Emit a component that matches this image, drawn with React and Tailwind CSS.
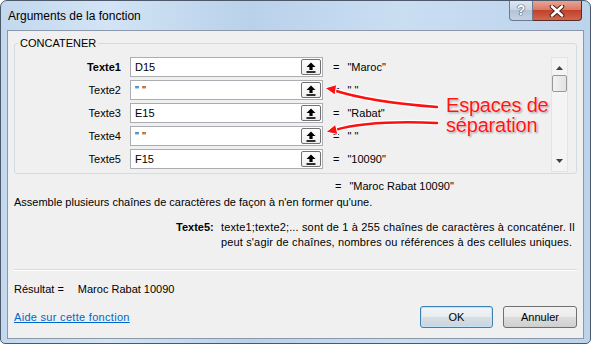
import React from 'react';

const rows = [
  { label: 'Texte1', input: 'D15', value: '"Maroc"', bold: true },
  { label: 'Texte2', input: '" "', value: '" "' },
  { label: 'Texte3', input: 'E15', value: '"Rabat"' },
  { label: 'Texte4', input: '" "', value: '" "' },
  { label: 'Texte5', input: 'F15', value: '"10090"' },
];

const RefIcon = () => (
  <svg width="10" height="11" viewBox="0 0 10 11">
    <path d="M5 0.5 L9.5 5 H6.6 V8 H3.4 V5 H0.5 Z" fill="#000" />
    <rect x="0.5" y="9.2" width="9" height="1.6" fill="#000" />
  </svg>
);

const ArgRow = ({ label, input, value, bold }) => (
  <div className="h-[20px] flex items-center">
    <div className={`w-[106px] text-right ${bold ? 'font-bold' : ''}`}>{label}</div>
    <div className="ml-[9px] w-[193px] h-[20px] border border-[#abadb3] bg-white flex items-center pl-[4px]">
      <span>{input}</span>
      <div className="ml-auto mr-[1px] w-[20px] h-[16px] border border-[#707070] rounded-[2px] bg-[linear-gradient(#ffffff,#f0f0f0)] flex items-center justify-center">
        <RefIcon />
      </div>
    </div>
    <div className="ml-[10px]">=</div>
    <div className="ml-[8px]">{value}</div>
  </div>
);

const Scrollbar = () => (
  <div className="w-[17px] h-[115px] ml-auto mr-[8px] border border-[#e4e4e4] bg-[#f4f4f4] flex flex-col items-center">
    <svg width="7" height="4" viewBox="0 0 7 4" className="mt-[8px]">
      <path d="M3.5 0 L7 4 H0 Z" fill="#404040" />
    </svg>
    <div className="mt-[5px] w-[15px] h-[17px] border border-[#979797] rounded-[2px] bg-[linear-gradient(90deg,#f3f3f3,#e2e2e2)]" />
    <svg width="7" height="4" viewBox="0 0 7 4" className="mt-auto mb-[8px]">
      <path d="M0 0 H7 L3.5 4 Z" fill="#404040" />
    </svg>
  </div>
);

const Annotation = () => (
  <>
    <svg className="absolute left-0 top-0 pointer-events-none" width="591" height="344">
      <g fill="none" strokeLinecap="round">
        <path d="M437 107 Q370 102 333 90" stroke="#fff" strokeWidth="5" />
        <path d="M437 123 Q370 120 335 130" stroke="#fff" strokeWidth="5" />
        <path d="M437 107 Q370 102 333 90" stroke="#ff1010" strokeWidth="2.6" />
        <path d="M437 123 Q370 120 335 130" stroke="#ff1010" strokeWidth="2.6" />
      </g>
      <polygon points="325,88 336.7,84.6 335,95" fill="#ff1010" stroke="#fff" strokeWidth="1" />
      <polygon points="326,132 337.9,134.6 335.5,124.4" fill="#ff1010" stroke="#fff" strokeWidth="1" />
    </svg>
    <div className="absolute left-[446px] top-[95px] text-[20px] leading-[20px] tracking-[-0.2px] text-[#ff1414] font-['Liberation_Sans',Arial,sans-serif] [text-shadow:0_0_2px_#fff,0_0_2px_#fff,1px_1px_2px_rgba(0,0,0,0.5)]">
      <div>Espaces de</div>
      <div>séparation</div>
    </div>
  </>
);

export default function App() {
  return (
    <div className="w-[591px] h-[344px] bg-white relative font-['Liberation_Sans',Arial,sans-serif] text-black">
      <div className="h-full flex flex-col border border-[#4b596b] rounded-t-[7px] rounded-b-[5px] bg-[linear-gradient(90deg,#c3d8ee,#d2e4f5_18%,#b9d1ea_42%,#cadef2_68%,#bcd3ec)]">
        <div className="h-[29px] flex items-start">
          <div className="text-[12px] leading-[14px] pl-[7px] pt-[8px]">Arguments de la fonction</div>
          <div className="ml-auto mr-[8px] flex">
            <div className="w-[24px] h-[20px] border border-[#6b7a8e] border-t-0 rounded-bl-[4px] bg-[linear-gradient(#dce6f1,#c6d4e4_50%,#b3c4d8_50%,#c3d2e3)] flex items-center justify-center text-[14px] font-bold text-white [text-shadow:0_0_1px_#3b4656,0_0_1px_#3b4656,0_0_1px_#3b4656]">
              ?
            </div>
            <div className="w-[49px] h-[20px] border border-[#5b2a24] border-l-0 border-t-0 rounded-br-[4px] bg-[linear-gradient(#e8a493,#d97560_50%,#c2422b_50%,#d1654e)] flex items-center justify-center">
              <svg width="16" height="12" viewBox="0 0 16 12">
                <path d="M3 1.5 L13 10.5 M13 1.5 L3 10.5" stroke="#4a2018" strokeWidth="4.6" strokeLinecap="round" />
                <path d="M3 1.5 L13 10.5 M13 1.5 L3 10.5" stroke="#fff" strokeWidth="2.6" strokeLinecap="round" />
              </svg>
            </div>
          </div>
        </div>

        <div className="flex-1 mx-[6px] mb-[4px] border border-[#8a98aa] bg-[#f0f0f0] flex flex-col text-[11px] leading-[13px]">
          <fieldset className="mt-[6px] mx-[6px] border border-[#d3dbe2] rounded-[3px] pt-[7px] pb-[1px]">
            <legend className="ml-[3px] px-[2px]">CONCATENER</legend>
            <div className="flex">
              <div className="flex flex-col gap-[3px]">
                {rows.map((r) => (
                  <ArgRow key={r.label} {...r} />
                ))}
              </div>
              <Scrollbar />
            </div>
          </fieldset>

          <div className="mt-[6px] pl-[327px] flex">
            <span>=</span>
            <span className="ml-[8px]">"Maroc Rabat 10090"</span>
          </div>

          <div className="mt-[3px] pl-[6px]">
            Assemble plusieurs chaînes de caractères de façon à n'en former qu'une.
          </div>

          <div className="mt-[11px] pl-[168px] flex leading-[15px]">
            <div className="w-[45px] font-bold">Texte5:</div>
            <div className="tracking-[0.15px]">
              <div>texte1;texte2;... sont de 1 à 255 chaînes de caractères à concaténer. Il</div>
              <div>peut s'agir de chaînes, nombres ou références à des cellules uniques.</div>
            </div>
          </div>

          <div className="mt-[19px] mx-[6px] h-px bg-[#d5dde3] border-b border-white box-content" />

          <div className="mt-[12px] pl-[6px] flex">
            <span>Résultat =</span>
            <span className="ml-[14px]">Maroc Rabat 10090</span>
          </div>

          <div className="mt-[10px] pl-[6px] pr-[6px] flex items-center">
            <a className="text-[#0066cc] underline tracking-[0.3px]">Aide sur cette fonction</a>
            <button className="ml-auto w-[73px] h-[22px] border border-[#3c7fb1] rounded-[3px] bg-[linear-gradient(#f2f5f8,#e8edf1_50%,#d8dfe5_50%,#ccd4db)] shadow-[inset_0_0_0_1px_#bfe4fb]">
              OK
            </button>
            <button className="ml-[10px] w-[74px] h-[22px] border border-[#707070] rounded-[3px] bg-[linear-gradient(#f2f2f2,#ebebeb_50%,#dddddd_50%,#cfcfcf)]">
              Annuler
            </button>
          </div>
        </div>
      </div>
      <Annotation />
    </div>
  );
}
